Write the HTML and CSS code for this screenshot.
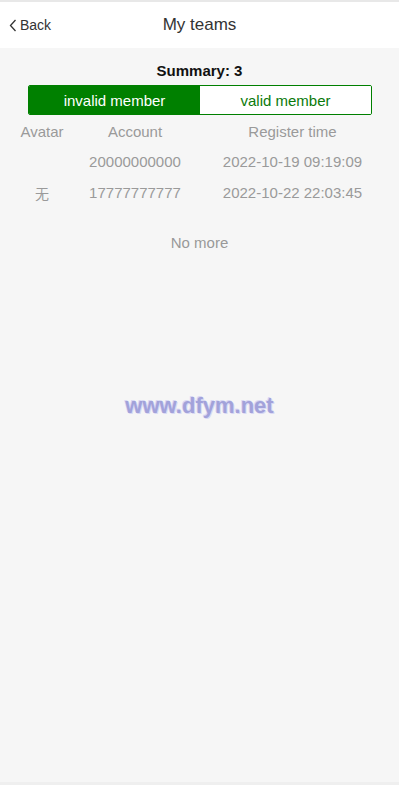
FILE: index.html
```html
<!DOCTYPE html>
<html lang="en">
<head>
<meta charset="utf-8">
<title>My teams</title>
<link rel="stylesheet" href="styles.css">
</head>
<body>
<div class="page">
  <header class="topbar">
    <a class="back">
      <svg class="chev" width="8" height="13" viewBox="0 0 8 13"><polyline points="6.5,1 1.5,6.5 6.5,12" fill="none" stroke="#333" stroke-width="1.3"/></svg>
      <span>Back</span>
    </a>
    <h1 class="title">My teams</h1>
  </header>
  <main class="content">
    <div class="summary">Summary: 3</div>
    <div class="tabs">
      <div class="tab active">invalid member</div>
      <div class="tab">valid member</div>
    </div>
    <div class="table">
      <div class="row head">
        <div>Avatar</div><div>Account</div><div>Register time</div>
      </div>
      <div class="row">
        <div></div><div>20000000000</div><div>2022-10-19 09:19:09</div>
      </div>
      <div class="row">
        <div class="cjk">无</div><div>17777777777</div><div>2022-10-22 22:03:45</div>
      </div>
    </div>
    <div class="nomore">No more</div>
  </main>
  <div class="watermark">www.dfym.net</div>
</div>
</body>
</html>
```
FILE: styles.css
```css
html, body {
  margin: 0;
  padding: 0;
  background: #efefef;
}
body {
  font-family: "Liberation Sans", Arial, sans-serif;
  color: #333;
}
.page {
  position: relative;
  height: 782px;
  background: #f6f6f6;
  overflow: hidden;
}
.topbar {
  position: relative;
  height: 46px;
  border-top: 2px solid #e8e8e8;
  background: #fff;
  display: flex;
  align-items: center;
  justify-content: center;
}
.back {
  position: absolute;
  left: 9px;
  top: 0;
  bottom: 0;
  display: flex;
  align-items: center;
  gap: 3px;
  font-size: 14px;
  color: #333;
}
.chev { display: block; margin-top: 1px; }
.title {
  margin: 0;
  font-size: 17px;
  font-weight: normal;
  color: #333;
}
.content {
  padding-top: 13px;
}
.summary {
  text-align: center;
  font-size: 15px;
  font-weight: bold;
  line-height: 20px;
  color: #111;
}
.tabs {
  margin: 4px 27px 0 28px;
  height: 28px;
  border: 1px solid #008000;
  border-radius: 2px;
  display: flex;
  overflow: hidden;
}
.tab {
  flex: 0 0 50%;
  display: flex;
  align-items: center;
  justify-content: center;
  font-size: 15px;
  color: #0a7a0a;
  background: #fff;
}
.tab.active {
  background: #008000;
  color: #fff;
}
.table {
  margin-top: 1px;
}
.row {
  display: grid;
  grid-template-columns: 84px 102px 1fr;
  height: 31px;
  align-items: center;
  text-align: center;
  font-size: 15px;
  color: #9a9a9a;
}
.row.head { height: 30px; }
.cjk { font-family: "Noto Sans CJK SC", sans-serif; font-size: 14px; }
.nomore {
  margin-top: 25px;
  text-align: center;
  font-size: 15px;
  line-height: 20px;
  color: #999;
}
.watermark {
  position: absolute;
  left: 0;
  right: 0;
  top: 392px;
  text-align: center;
  font-size: 22px;
  font-weight: bold;
  line-height: 28px;
  color: #a2a2da;
  text-shadow: 0 0 1px #d4d4f2, 1px 1px 0 #dadaf4, -1px -1px 0 #dadaf4;
}
```
